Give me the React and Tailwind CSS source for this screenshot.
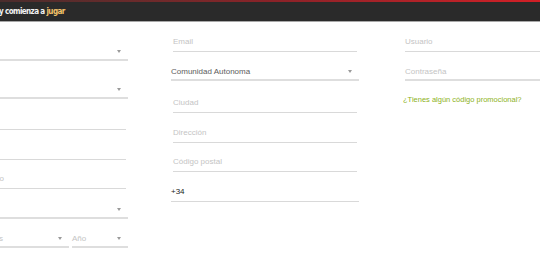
import React from 'react'

const Caret = () => (
  <span className="w-0 h-0 border-x-[2px] border-t-[3px] border-x-transparent border-t-[#9a9a9a]" />
)

const Input = ({ placeholder, value, className = '' }) => (
  <div className={`h-[19px] mx-[2px] flex items-center border-b border-[#d9d9d9] ${className}`}>
    <span className={value ? 'text-[#222]' : 'text-[#c4c4c4]'}>{value || placeholder}</span>
  </div>
)

const Select = ({ label, className = '', dark }) => (
  <div className={`h-[19px] pt-[2px] flex items-center justify-between pr-[7px] border-b-2 border-[#dedede] ${className}`}>
    <span className={dark ? 'text-[#5c5c5c]' : 'text-[#c4c4c4]'}>{label}</span>
    <Caret />
  </div>
)

export default function App() {
  return (
    <div
      className="w-[540px] h-[272px] overflow-hidden bg-white text-[8px] leading-none"
      style={{ fontFamily: '"Liberation Sans", Arial, sans-serif' }}
    >
      <div className="flex flex-col">
        <div className="h-[2px] bg-gradient-to-r from-[#4a2c2c] via-[#8a2228] to-[#d21f26]" />
        <div className="h-[19px] bg-[#2a2a2a] flex items-center">
          <span
            className="-ml-[1px] text-[8px] font-bold text-[#f2f2f2] tracking-[-0.6px]"
            style={{ fontFamily: '"DejaVu Sans Condensed", "Liberation Sans", sans-serif' }}
          >
            y comienza a <span className="text-[#f3c26b]">jugar</span>
          </span>
        </div>
        <div className="h-[1px] bg-[#a8a8a8]" />
      </div>

      <div className="flex items-start -ml-[60px]">
        <div className="w-[188px] shrink-0 flex flex-col">
          <Select className="mt-[20px]" />
          <Select className="mt-[19px]" />
          <Input className="mt-[12px]" />
          <Input className="mt-[11px]" />
          <Input placeholder="Segundo apellido" className="mt-[10px]" />
          <Select className="mt-[11px]" />
          <div className="flex mt-[10px]">
            <Select className="w-[45px] shrink-0" />
            <Select label="Mes" className="w-[81px] shrink-0 ml-[3px]" />
            <Select label="Año" className="w-[56px] shrink-0 ml-[3px]" />
          </div>
        </div>

        <div className="w-[188px] shrink-0 ml-[43px] flex flex-col">
          <Input placeholder="Email" className="mt-[11px]" />
          <Select label="Comunidad Autonoma" dark className="mt-[10px]" />
          <Input placeholder="Ciudad" className="mt-[13px]" />
          <Input placeholder="Dirección" className="mt-[11px]" />
          <Input placeholder="Código postal" className="mt-[10px]" />
          <div className="h-[19px] mt-[11px] flex items-center border-b border-[#d9d9d9]">
            <span className="text-[#222]">+34</span>
          </div>
        </div>

        <div className="w-[200px] shrink-0 ml-[44px] flex flex-col">
          <Input placeholder="Usuario" className="mt-[11px]" />
          <Input placeholder="Contraseña" className="mt-[10px] pt-[2px] border-b-2 border-[#dedede]" />
          <p className="mt-[15px] text-[7.5px] text-[#8db21b]">¿Tienes algún código promocional?</p>
        </div>
      </div>
    </div>
  )
}
